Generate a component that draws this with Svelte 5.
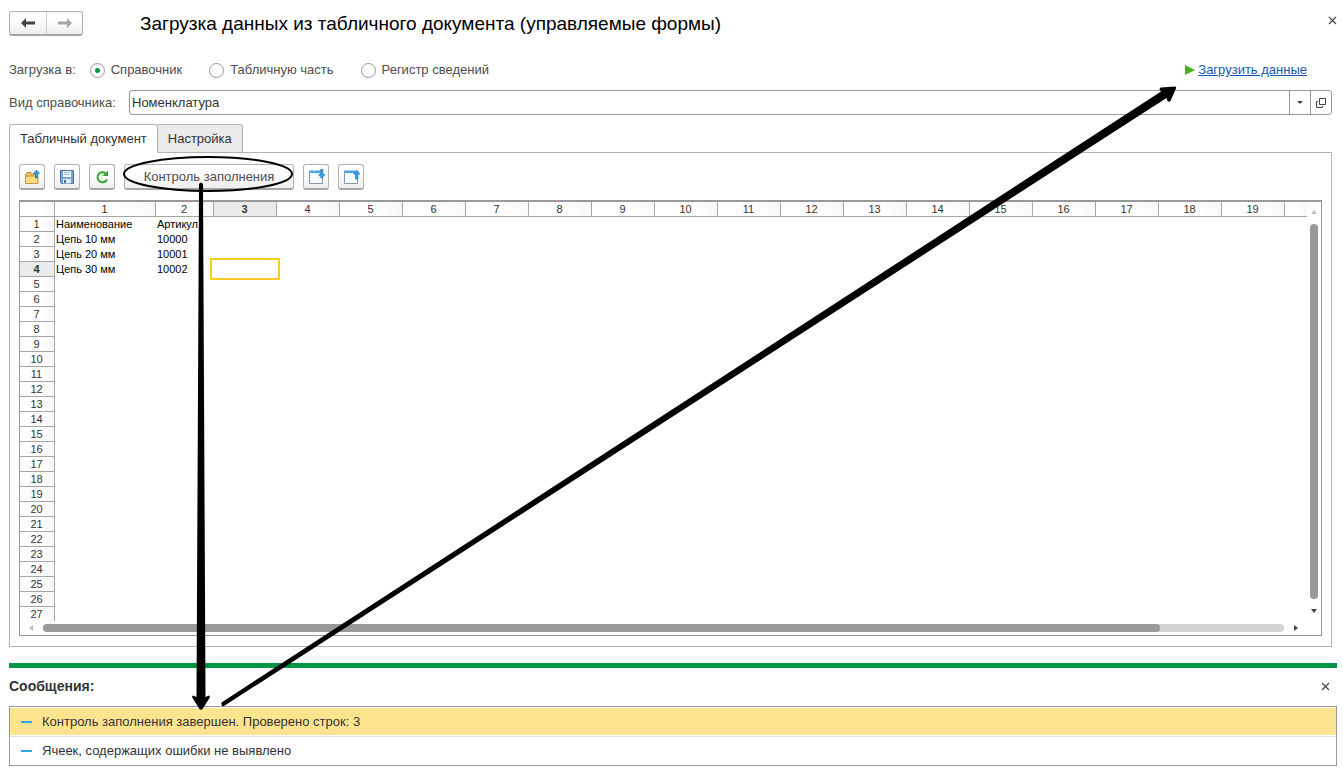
<script lang="ts">
  const targets = ["Справочник", "Табличную часть", "Регистр сведений"];
  const columns = Array.from({ length: 19 }, (_, i) => i + 1);
  const rows = Array.from({ length: 27 }, (_, i) => i + 1);
  const cells: Record<number, string[]> = {
    1: ["Наименование", "Артикул"],
    2: ["Цепь 10 мм", "10000"],
    3: ["Цепь 20 мм", "10001"],
    4: ["Цепь 30 мм", "10002"],
  };
  const messages = [
    "Контроль заполнения завершен. Проверено строк: 3",
    "Ячеек, содержащих ошибки не выявлено",
  ];

  let target = $state("Справочник");
  let kind = $state("Номенклатура");
  let tab = $state(0);
  let activeRow = $state(4);
  let activeCol = $state(3);
  let activeMessage = $state(0);
</script>

{#snippet cross()}
  <svg width="9" height="9" viewBox="0 0 9 9" aria-hidden="true">
    <path d="M1 1l7 7M8 1l-7 7" stroke="#444" stroke-width="1.2" />
  </svg>
{/snippet}

<div class="window">
  <header class="title-bar">
    <div class="history">
      <button type="button" aria-label="Назад">
        <svg width="14" height="10" viewBox="0 0 14 10"><path d="M0 5l5-5v3.500h9v3H5V10z" fill="#444" /></svg>
      </button>
      <button type="button" aria-label="Вперед">
        <svg width="14" height="10" viewBox="0 0 14 10"><path d="M14 5L9 0v3.500H0v3h9V10z" fill="#a6a6a6" /></svg>
      </button>
    </div>
    <h1>Загрузка данных из табличного документа (управляемые формы)</h1>
    <button type="button" class="close" aria-label="Закрыть">{@render cross()}</button>
  </header>

  <div class="options">
    <span class="label" id="target-label">Загрузка в:</span>
    <div class="radios" role="radiogroup" aria-labelledby="target-label">
      {#each targets as name}
        <label><input type="radio" name="target" value={name} bind:group={target} />{name}</label>
      {/each}
    </div>
    <svg class="play" width="10" height="10" viewBox="0 0 10 10" aria-hidden="true"><path d="M0 0l10 5-10 5z" fill="#46b41e" /></svg>
    <a href="#load">Загрузить данные</a>
  </div>

  <div class="field">
    <label class="label" for="kind">Вид справочника:</label>
    <div class="combo">
      <input id="kind" type="text" bind:value={kind} />
      <button type="button" aria-label="Выбрать из списка">
        <svg width="6" height="3" viewBox="0 0 6 3"><path d="M0 0h6L3 3z" fill="#444" /></svg>
      </button>
      <button type="button" aria-label="Открыть">
        <svg width="10" height="10" viewBox="0 0 10 10"><path d="M3.500.5h6v6h-6zM2 3.500H.5v6h6V8" fill="none" stroke="#444" /></svg>
      </button>
    </div>
  </div>

  <div class="tabs" role="tablist">
    <button type="button" role="tab" aria-selected={tab === 0} onclick={() => (tab = 0)}>Табличный документ</button>
    <button type="button" role="tab" aria-selected={tab === 1} onclick={() => (tab = 1)}>Настройка</button>
  </div>

  <section class="panel">
    <div class="toolbar">
      <button type="button" class="tool" aria-label="Открыть файл">
        <svg width="16" height="16" viewBox="0 0 16 16">
          <path d="M1.500 14V5.500l1.500-2h4l1 1.500h5.500v9z" fill="#efc25c" stroke="#c08a2c" />
          <path d="M1.500 14.500V8l1-1h11.500v7.500z" fill="#fbdc84" stroke="#c8963a" />
          <path d="M12.500 1l3 3.500h-2V9h-2V4.500h-2z" fill="#36a3e8" stroke="#1d6fae" stroke-width=".7" />
        </svg>
      </button>
      <button type="button" class="tool" aria-label="Сохранить">
        <svg width="16" height="16" viewBox="0 0 16 16">
          <path d="M1.500 1.500h13v13h-12l-1-1z" fill="#78a6d8" stroke="#44709f" />
          <path d="M4 2h8v6H4z" fill="#fff" />
          <path d="M5 3.500h6M5 5.500h6" stroke="#9db4cc" />
          <path d="M4 10h8v4.500H4z" fill="#e8edf2" />
          <path d="M5 11h2v3H5z" fill="#44709f" />
        </svg>
      </button>
      <button type="button" class="tool" aria-label="Обновить">
        <svg width="16" height="16" viewBox="0 0 16 16">
          <path d="M11.500 4.200A5 5 0 1 0 13 10.500" fill="none" stroke="#2ca52c" stroke-width="2" />
          <path d="M14 1.500V7H8.500z" fill="#2ca52c" />
        </svg>
      </button>
      <button type="button" class="tool check">
        Контроль заполнения
        <svg class="ellipse" width="172" height="38" viewBox="0 0 172 38" aria-hidden="true">
          <ellipse cx="86" cy="19" rx="84" ry="17" fill="none" stroke="#000" stroke-width="2" />
        </svg>
      </button>
      <button type="button" class="tool" aria-label="Выгрузить">
        <svg width="17" height="16" viewBox="0 0 17 16">
          <path d="M1.500 2.500h13v12h-13z" fill="#fbfcfd" stroke="#8095ad" />
          <path d="M1 1.500h11v2.500H1z" fill="#4aa6e8" />
          <path d="M12.500.5h2.500v5h2l-3.200 4-3.300-4h2z" fill="#36a3e8" stroke="#2277b8" stroke-width=".7" />
        </svg>
      </button>
      <button type="button" class="tool" aria-label="Загрузить">
        <svg width="17" height="16" viewBox="0 0 17 16">
          <path d="M1.500 2.500h13v12h-13z" fill="#fbfcfd" stroke="#8095ad" />
          <path d="M1 1.500h11v2.500H1z" fill="#4aa6e8" />
          <path d="M13.700 1l3.100 4h-1.900v5h-2.400V5h-2z" fill="#36a3e8" stroke="#2277b8" stroke-width=".7" />
        </svg>
      </button>
    </div>

    <div class="sheet">
      <div class="grid">
        <table>
          <colgroup>
            <col class="c-num" /><col class="c-name" /><col class="c-code" />
            {#each columns.slice(2) as _}<col class="c-cell" />{/each}
            <col />
          </colgroup>
          <thead>
            <tr>
              <th></th>
              {#each columns as c}<th class:active={c === activeCol}>{c}</th>{/each}
              <th></th>
            </tr>
          </thead>
          <tbody>
            {#each rows as r}
              <tr>
                <th class:active={r === activeRow}>{r}</th>
                {#each columns as c}
                  <td class:selected={r === activeRow && c === activeCol} onclick={() => { activeRow = r; activeCol = c; }}>{cells[r]?.[c - 1] ?? ""}</td>
                {/each}
                <td></td>
              </tr>
            {/each}
          </tbody>
        </table>
      </div>
      <div class="scroll-y" aria-hidden="true">
        <svg width="6" height="4" viewBox="0 0 6 4"><path d="M3 0l3 4H0z" fill="#bbb" /></svg>
        <div class="track"></div>
        <svg width="6" height="4" viewBox="0 0 6 4"><path d="M0 0h6L3 4z" fill="#444" /></svg>
      </div>
      <div class="scroll-x" aria-hidden="true">
        <svg width="4" height="6" viewBox="0 0 4 6"><path d="M4 0v6L0 3z" fill="#bbb" /></svg>
        <div class="track"><div class="thumb"></div></div>
        <svg width="4" height="6" viewBox="0 0 4 6"><path d="M0 0v6l4-3z" fill="#444" /></svg>
      </div>
    </div>
  </section>

  <section class="messages">
    <div class="messages-head">
      <h2>Сообщения:</h2>
      <button type="button" class="close" aria-label="Закрыть сообщения">{@render cross()}</button>
    </div>
    <ul>
      {#each messages as text, i}
        <li class:current={i === activeMessage}>
          <button type="button" onclick={() => (activeMessage = i)}><span class="dash"></span>{text}</button>
        </li>
      {/each}
    </ul>
  </section>

  <!-- hand-drawn pointers over the form -->
  <svg class="pointers" viewBox="0 0 1343 774" preserveAspectRatio="none" aria-hidden="true">
    <path d="M199 184q2-3 4 0L205.500 697l3.500-1.500q1.500 1 .5 2.500l-7 11q-1.500 1.500-3 0l-7-11q-1-1.500.5-2.500l3.500 1.500z" />
    <path d="M221.500 702.500L1161 91.500l-1.500-2q0-2 1.500-2l14-1q1.500.5 1 2l-5.500 12.500q-1.500 1.500-3 0l-1-3L224 706q-3 1-2.500-3.500z" />
  </svg>
</div>

<style>
  :global(body) {
    background: #fff;
  }
  .window {
    position: relative;
    padding: 11px 6px 8px 9px;
    font: 13px/16px "Liberation Sans", Arial, sans-serif;
    color: #4d4d4d;
  }
  button,
  input {
    font: inherit;
    color: inherit;
    margin: 0;
  }
  button {
    padding: 0;
  }
  svg {
    display: block;
  }
  .title-bar {
    display: flex;
    align-items: center;
  }
  .history {
    display: flex;
    border: 1px solid #b3b3b3;
    border-bottom: 2px solid #a6a6a6;
    border-radius: 3px;
    background: linear-gradient(#fff 40%, #ededed);
  }
  .history button {
    width: 36px;
    height: 22px;
    display: grid;
    place-items: center;
    border: 0;
    background: none;
  }
  .history button + button {
    border-left: 1px solid #d0d0d0;
  }
  h1 {
    flex: 1;
    margin: 0 0 0 57px;
    font-size: 19px;
    line-height: 24px;
    font-weight: 400;
    color: #000;
  }
  .close {
    display: grid;
    place-items: center;
    border: 0;
    background: none;
  }
  .title-bar .close {
    align-self: flex-start;
    margin-top: 5px;
  }
  .options {
    display: flex;
    align-items: center;
    margin: 26px 30px 0 0;
  }
  .label {
    flex: none;
  }
  .radios {
    flex: 1;
    display: flex;
    gap: 27px;
    margin-left: 14px;
  }
  .radios label {
    display: flex;
    align-items: center;
    gap: 6px;
  }
  .radios input {
    appearance: none;
    width: 15px;
    height: 15px;
    border: 1px solid #999;
    border-radius: 50%;
    background: #fff;
  }
  .radios input:checked {
    background: radial-gradient(circle, #009646 2px, #fff 3px);
  }
  .play {
    margin-right: 3px;
  }
  a {
    color: #1a56b4;
  }
  .field {
    display: flex;
    align-items: center;
    margin: 12px 5px 0 0;
  }
  .field .label {
    width: 120px;
  }
  .combo {
    flex: 1;
    display: flex;
    height: 23px;
    border: 1px solid #999;
    border-radius: 3px;
  }
  .combo input {
    flex: 1;
    min-width: 0;
    padding: 0 2px;
    border: 0;
    outline: 0;
    background: none;
    color: #333;
  }
  .combo button {
    width: 21px;
    display: grid;
    place-items: center;
    border: 0;
    border-left: 1px solid #999;
    background: none;
  }
  .tabs {
    display: flex;
    margin-top: 9px;
  }
  .tabs button {
    height: 29px;
    padding: 0 10px;
    border: 1px solid #b3b3b3;
    border-left: 0;
    background: #ebebeb;
    border-radius: 0 3px 0 0;
    color: #333;
  }
  .tabs button:first-child {
    border-left: 1px solid #b3b3b3;
    border-radius: 3px 3px 0 0;
  }
  .tabs button[aria-selected="true"] {
    background: #fff;
    border-bottom-color: #fff;
    position: relative;
  }
  .panel {
    margin: -1px 5px 0 0;
    padding: 11px 9px 10px;
    border: 1px solid #b3b3b3;
  }
  .toolbar {
    display: flex;
    gap: 9px;
  }
  .tool {
    width: 26px;
    height: 26px;
    display: grid;
    place-items: center;
    border: 1px solid #b3b3b3;
    border-bottom: 2px solid #a6a6a6;
    border-radius: 3px;
    background: linear-gradient(#fff 40%, #ededed);
  }
  .check {
    position: relative;
    width: 170px;
  }
  .ellipse {
    position: absolute;
    left: -3px;
    top: -10px;
  }
  .sheet {
    display: grid;
    grid-template-columns: 1fr 14px;
    margin-top: 10px;
    border: 1px solid #999;
    border-top-width: 2px;
  }
  .grid {
    overflow: hidden;
    height: 419px;
  }
  table {
    width: 100%;
    table-layout: fixed;
    border-collapse: separate;
    border-spacing: 0;
    font-size: 11px;
    line-height: 14px;
    color: #000;
  }
  .c-num {
    width: 35px;
  }
  .c-name {
    width: 101px;
  }
  .c-code {
    width: 58px;
  }
  .c-cell {
    width: 63px;
  }
  th,
  td {
    height: 14px;
    padding: 0 0 1px 1px;
    white-space: nowrap;
  }
  th {
    padding: 0 1px 0 0;
    border: solid #a6a6a6;
    border-width: 0 1px 1px 0;
    background: linear-gradient(90deg, #fff 60%, #f7f7f7);
    font-weight: 400;
    color: #333;
  }
  th.active {
    background: #ebebeb;
    font-weight: 700;
  }
  thead th:last-child {
    border-right: 0;
  }
  td {
    text-align: left;
  }
  .selected {
    position: relative;
  }
  .selected::after {
    content: "";
    position: absolute;
    inset: -4px -3px -3px -4px;
    border: 2px solid #facc22;
  }
  .scroll-y {
    display: flex;
    flex-direction: column;
    align-items: center;
    gap: 10px;
    padding: 8px 0 8px;
  }
  .scroll-y .track {
    flex: 1;
    width: 8px;
    border-radius: 4px;
    background: #999;
  }
  .scroll-x {
    display: flex;
    align-items: center;
    gap: 10px;
    height: 14px;
    padding: 0 9px;
  }
  .scroll-x .track {
    flex: 1;
    height: 8px;
    border-radius: 4px;
    background: #d4d4d4;
  }
  .thumb {
    width: 90%;
    height: 100%;
    border-radius: 4px;
    background: #999;
  }
  .messages {
    margin-top: 16px;
    border-top: 5px solid #009646;
  }
  .messages-head {
    display: flex;
    justify-content: space-between;
    align-items: center;
    padding: 10px 7px 12px 0;
  }
  h2 {
    margin: 0;
    font-size: 14px;
    line-height: 16px;
    color: #333;
  }
  ul {
    margin: 0;
    padding: 1px 0 0;
    list-style: none;
    border: 1px solid #999;
  }
  li {
    padding-bottom: 1px;
    border-bottom: 1px solid #e0e0e0;
  }
  li:last-child {
    border-bottom: 0;
  }
  li button {
    display: flex;
    align-items: center;
    width: 100%;
    height: 27px;
    padding: 0 11px;
    border: 0;
    background: none;
    color: #333;
  }
  li.current button {
    background: #ffe48f;
  }
  .dash {
    width: 11px;
    height: 2px;
    margin-right: 10px;
    background: #2aa8e0;
  }
  .pointers {
    position: absolute;
    left: 0;
    top: 0;
    width: 100%;
    height: 774px;
    pointer-events: none;
  }
</style>
